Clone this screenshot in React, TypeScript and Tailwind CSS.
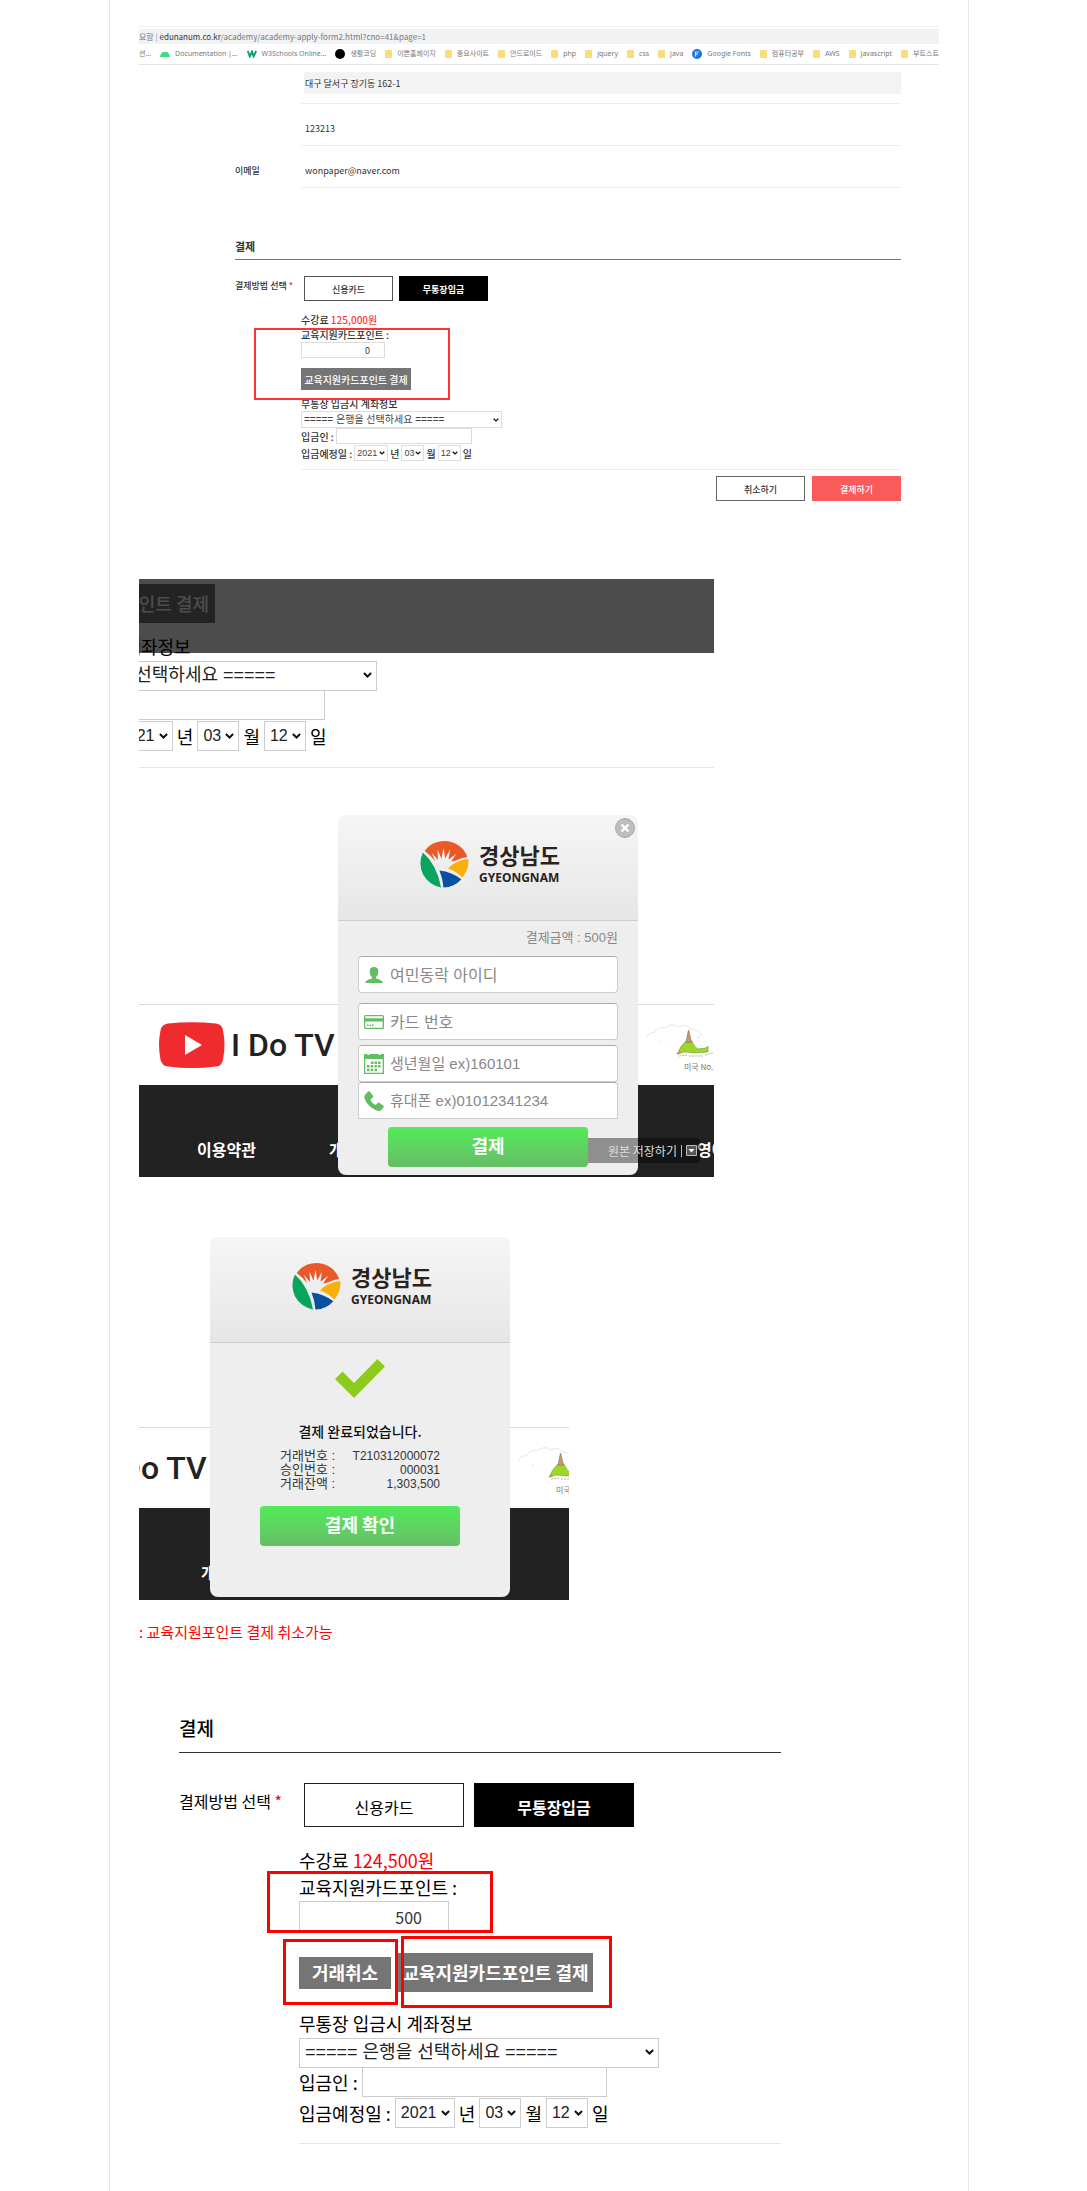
import type { ReactNode } from 'react';
import { clsx } from 'clsx';

const bookmarks = [
  { label: 'Documentation  |...', icon: 'android' },
  { label: 'W3Schools Online...', icon: 'w3' },
  { label: '생활코딩', icon: 'dot' },
  { label: '이쁜홈페이지', icon: 'folder' },
  { label: '중요사이트', icon: 'folder' },
  { label: '안드로이드', icon: 'folder' },
  { label: 'php', icon: 'folder' },
  { label: 'jquery', icon: 'folder' },
  { label: 'css', icon: 'folder' },
  { label: 'java', icon: 'folder' },
  { label: 'Google Fonts', icon: 'fonts' },
  { label: '컴퓨터공부', icon: 'folder' },
  { label: 'AWS', icon: 'folder' },
  { label: 'javascript', icon: 'folder' },
  { label: '부트스트', icon: 'folder' }
];

const receipt = [
  { label: '거래번호 :', value: 'T210312000072' },
  { label: '승인번호 :', value: '000031' },
  { label: '거래잔액 :', value: '1,303,500' }
];

function BookmarkIcon({ name }: { name: string }) {
  if (name === 'android') {
    return (
      <svg viewBox="0 0 10 6" className="h-[6px] w-[10px] shrink-0" fill="#3ddc84">
        <path d="M0 6a5 5 0 0 1 2-4L1.500.5l.8 1A5 5 0 0 1 7.700 1.500l.8-1L8 2a5 5 0 0 1 2 4z" />
      </svg>
    );
  }
  if (name === 'w3') {
    return (
      <svg viewBox="0 0 10 8" className="h-2 w-[10px] shrink-0" fill="none" stroke="#0a9d68" strokeWidth="1.800">
        <path d="M.8 1l2 5.500L5 1.500l1.500 5L9.200 1" />
      </svg>
    );
  }
  if (name === 'dot') {
    return <span className="size-[10px] shrink-0 rounded-full bg-black" />;
  }
  if (name === 'fonts') {
    return (
      <svg viewBox="0 0 10 10" className="size-[10px] shrink-0">
        <circle cx="5" cy="5" r="5" fill="#1a73e8" />
        <path d="M3.500 7.500V3h3.500M3.500 5.200h2.500" stroke="#cfe2ff" strokeWidth="1.200" fill="none" />
      </svg>
    );
  }
  return <span className="h-2 w-[7px] shrink-0 rounded-[1px] bg-[#fbdc7a]" />;
}

function Chevron({ small }: { small?: boolean }) {
  return (
    <svg
      viewBox="0 0 10 7"
      className={clsx('pointer-events-none absolute top-1/2 -translate-y-1/2', small ? 'right-[3px] h-1 w-[6px]' : 'right-[5px] h-[7px] w-[9px]')}
      fill="none"
      stroke="#111"
      strokeWidth="2.200"
    >
      <path d="M1 1.200l4 4 4-4" />
    </svg>
  );
}

function Picker({ label, value, className, small }: { label: string; value: string; className: string; small?: boolean }) {
  return (
    <span className={clsx('relative block shrink-0', className)}>
      <select
        aria-label={label}
        className={clsx(
          "size-full appearance-none border bg-white font-['Liberation_Sans','Noto_Sans_CJK_KR',sans-serif] font-normal",
          small ? 'border-[#ddd] pl-0.5 text-[#444]' : 'border-[#ccc] pl-[5px] text-[#222]'
        )}
      >
        <option>{value}</option>
      </select>
      <Chevron small={small} />
    </span>
  );
}

function BankFields({ small }: { small?: boolean }) {
  const row = clsx('flex items-center whitespace-nowrap', small ? 'gap-0.5' : 'gap-1');
  return (
    <div className={small ? 'text-[10px] font-medium' : 'text-[18px] text-black'}>
      <p className={clsx('whitespace-nowrap', small ? 'leading-[15px]' : 'leading-[27px]')}>무통장 입금시 계좌정보</p>
      <Picker
        label="은행"
        value="===== 은행을 선택하세요 ====="
        small={small}
        className={small ? 'h-[17px] w-[201px]' : 'h-[30px] w-[360px]'}
      />
      <label className={row}>
        <span>입금인 :</span>
        <input type="text" className={clsx('border bg-white', small ? 'h-4 w-[136px] border-[#ddd]' : 'h-[30px] w-[245px] border-[#ccc]')} />
      </label>
      <div className={clsx(row, 'mt-px', small ? 'h-4' : 'h-[30px]')}>
        <span>입금예정일 :</span>
        <Picker label="년" value="2021" small={small} className={small ? 'h-4 w-[34px] text-[9px]' : 'h-[30px] w-[60px] text-base'} />
        <span>년</span>
        <Picker label="월" value="03" small={small} className={small ? 'h-4 w-[23px] text-[9px]' : 'h-[30px] w-[42px] text-base'} />
        <span>월</span>
        <Picker label="일" value="12" small={small} className={small ? 'h-4 w-[23px] text-[9px]' : 'h-[30px] w-[42px] text-base'} />
        <span>일</span>
      </div>
    </div>
  );
}

function GyeongnamLogo() {
  return (
    <div className="flex items-center justify-center gap-2.5 pl-1 text-[#2b2220]">
      <svg viewBox="0 0 49 49" className="size-[49px]">
        <path
          d="M4.700 12A24.300 24.300 0 0 1 47.300 18Q41 18.500 36 21.500L31 22.500 36.500 14.500 28.500 20.800 30 10.500 25.300 19.500 23.500 9 21.500 19.800 17.500 10.500 18 21 11.500 13.500 15.300 22.300Q10 16 4.700 12z"
          fill="#ea5a28"
        />
        <path d="M3 13.500Q17 26 21 48.400A24.300 24.300 0 0 1 3 13.500z" fill="#0aa45f" />
        <path d="M48.300 20Q34 22 28 29.500Q36 32 42.200 38.500A24.300 24.300 0 0 0 48.300 20z" fill="#f8b008" />
        <path d="M19.500 31.500Q32 33 41.300 40.300A24.300 24.300 0 0 1 23.500 48.600Q22.500 39 19.500 31.500z" fill="#0a4fa3" />
      </svg>
      <div>
        <p className="mb-[5px] text-[22px] font-bold leading-6">경상남도</p>
        <p className="font-['Noto_Sans',sans-serif] text-[12px] font-bold leading-[14px]">GYEONGNAM</p>
      </div>
    </div>
  );
}

function Popup({ children, className }: { children: ReactNode; className: string }) {
  return (
    <div className={clsx('absolute h-[360px] w-[300px] overflow-hidden rounded-lg bg-[#eee]', className)}>
      <div className="h-[106px] border-b border-[#ccc] bg-gradient-to-b from-[#f6f6f6] to-[#e6e6e6] pt-6">
        <GyeongnamLogo />
      </div>
      {children}
    </div>
  );
}

const popupButton =
  'mx-auto block h-10 w-[200px] rounded bg-gradient-to-b from-[#50ec58] to-[#66bd66] pb-1 text-[18px] font-bold text-white';

function PhotoIllustration() {
  return (
    <svg viewBox="0 0 72 36" className="h-9 w-[72px]">
      <path
        d="M1 14q3-6 8-5 4-7 11-5 7-6 14-1 8-4 11 2 8 0 12 6M15 18h2M20 19h1M52 14l4-2M58 18h3M55 22h2"
        stroke="#e6e6e6"
        fill="none"
      />
      <path d="M34 32l8-1M44 32h14M60 31l8-2" stroke="#b9b2a0" strokeDasharray="2 1" />
      <path d="M41 17h6q2 6 6 8l8-1 2-2v6l-14 1q-8-1-10-1l-6 2q1-7 8-13z" fill="#9fd62a" stroke="#6f9a2c" strokeWidth=".6" />
      <path d="M41 18l2.500-12 3 12q-3 1-5.500 0z" fill="#c69a6d" stroke="#8b6b4c" strokeWidth=".6" />
      <path d="M32 30l3-2" stroke="#d9826b" strokeWidth="2" />
    </svg>
  );
}

function SiteFooter({ className }: { className?: string }) {
  return (
    <footer className={clsx('whitespace-nowrap border-t border-[#dcdad8]', className)}>
      <div className="flex h-20 items-center pl-5">
        <svg viewBox="0 0 66 46" className="h-[46px] w-[66px] shrink-0">
          <path d="M9 1.500Q33-1 57 1.500q6 .5 7 7 3 14 0 29-1 6.500-7 7-24 3-48 0-6-.5-7.500-7-3-15 0-29Q3 2 9 1.500z" fill="#ee2b2e" />
          <path d="M26 13l17 10-17 10z" fill="#fff" />
        </svg>
        <p className="ml-1.5 w-[414px] shrink-0 font-['Roboto',sans-serif] text-[32px] font-medium leading-none text-[#222]">I Do TV</p>
        <div className="shrink-0 pt-2">
          <PhotoIllustration />
          <p className="pl-[39px] text-[8px] leading-[14px] text-[#777]">미국 No.1</p>
        </div>
      </div>
      <nav className="flex h-[92px] bg-[#222] pl-[58px] pt-[52px] text-base font-bold leading-6 text-white">
        <a href="#terms" className="w-[132px] shrink-0">이용약관</a>
        <a href="#privacy" className="w-[368px] shrink-0">개인</a>
        <a href="#video">영어</a>
      </nav>
    </footer>
  );
}

const fieldBox = 'flex h-[37px] items-center gap-1.5 rounded border border-[#ccc] border-t-[#aaa] bg-white pl-[5px]';

function Field({ icon, placeholder, className, inputClass }: { icon: ReactNode; placeholder: string; className?: string; inputClass: string }) {
  return (
    <label className={clsx(fieldBox, className)}>
      <svg viewBox="0 0 20 20" className="size-5 shrink-0" fill="#62bd62">
        {icon}
      </svg>
      <input
        type="text"
        aria-label={placeholder}
        placeholder={placeholder}
        className={clsx(
          "w-full min-w-0 pt-0.5 font-['Liberation_Sans','Noto_Sans_CJK_KR',sans-serif] placeholder:text-[#888]",
          inputClass
        )}
      />
    </label>
  );
}

function BrowserBar() {
  return (
    <div className="border-t border-[#f0f0f0] pt-0.5 text-[8px] text-[#777]">
      <p className="h-[15px] whitespace-nowrap bg-[#f1f2f4] leading-[15px]">
        요함 <span className="text-[#999]">|</span> <span className="text-[#333]">edunanum.co.kr</span>
        /academy/academy-apply-form2.html?cno=41&amp;page=1
      </p>
      <div className="flex h-[21px] items-center justify-between overflow-hidden whitespace-nowrap border-b border-[#e4e4e4] font-['Noto_Sans','Noto_Sans_CJK_KR',sans-serif] text-[7px]">
        <span>션...</span>
        {bookmarks.map((item) => (
          <a key={item.label} href="#bookmark" className="flex items-center gap-[5px]">
            <BookmarkIcon name={item.icon} />
            {item.label}
          </a>
        ))}
      </div>
    </div>
  );
}

function ApplyForm() {
  return (
    <section>
      <BrowserBar />
      <div className="ml-24 mr-[38px] text-[#333]">
        {/* Applicant info */}
        <div className="ml-[66px] pt-[7px] text-[9px]">
          <div className="border-b border-[#eee] pb-[9px] pl-[3px]">
            <p className="h-[22px] bg-[#f3f3f3] pl-px leading-6">대구 달서구 장기동 162-1</p>
          </div>
          <p className="h-[42px] border-b border-[#eee] pl-1 pt-2 leading-[34px]">123213</p>
        </div>
        <div className="flex text-[9px] leading-[34px]">
          <span className="w-[66px] shrink-0 pt-2 font-medium">이메일</span>
          <p className="h-[42px] grow border-b border-[#eee] pl-1 pt-2">wonpaper@naver.com</p>
        </div>

        {/* Payment */}
        <h2 className="mt-[46px] h-[26px] border-b border-[#777] text-[11px] font-bold leading-6">결제</h2>
        <div className="flex">
          <p className="w-[66px] shrink-0 whitespace-nowrap pt-[18px] text-[9px] font-medium leading-4">
            결제방법 선택 <span className="text-red-500">*</span>
          </p>
          <div className="grow pt-4">
            <div className="flex gap-1.5 pl-[3px] text-[9px] font-medium">
              <button type="button" className="h-[25px] w-[89px] border border-[#555] pt-0.5">신용카드</button>
              <button type="button" className="h-[25px] w-[89px] bg-black pt-0.5 font-bold text-white">무통장입금</button>
            </div>
            <div className="border-b border-[#eee] pb-2 pt-[11px] text-[10px] font-medium leading-[15px]">
              <p>수강료 <span className="text-[#ff3b3b]">125,000원</span></p>
              <div className="relative">
                <label className="block">
                  교육지원카드포인트 :
                  <input type="text" defaultValue="0" className="block h-4 w-[84px] border border-[#ddd] bg-white pr-3.5 text-right text-[9px] font-normal" />
                </label>
                <button type="button" className="mt-[10px] block h-[22px] w-[110px] whitespace-nowrap bg-[#757575] text-[10px] text-white">
                  교육지원카드포인트 결제
                </button>
                <div className="pointer-events-none absolute -left-[47px] top-px h-[72px] w-[196px] border-2 border-[#fb3535]" />
              </div>
              <div className="mt-1.5">
                <BankFields small />
              </div>
            </div>
          </div>
        </div>
        <div className="mt-1.5 flex justify-end gap-[7px] text-[9px] font-medium">
          <button type="button" className="h-[25px] w-[89px] border border-[#666] pt-0.5">취소하기</button>
          <button type="button" className="h-[25px] w-[89px] bg-[#f95b5a] pt-0.5 text-white">결제하기</button>
        </div>
      </div>
    </section>
  );
}

function PayPopupShot() {
  return (
    <section className="relative mt-[78px] max-w-[575px] overflow-hidden">
      <div className="border-b border-[#e6e6e6] pb-4 pt-[5px]">
        <div className="-ml-[122px] text-[#111]">
          <button type="button" className="mb-[10px] block h-[39px] w-[198px] whitespace-nowrap bg-[#757575] text-[18px] font-medium text-white">
            교육지원카드포인트 결제
          </button>
          <BankFields />
        </div>
      </div>
      <div className="absolute inset-x-0 top-0 h-[74px] bg-black/70" />
      <SiteFooter className="mt-[236px]" />

      <Popup className="left-[199px] top-[236px]">
        <button type="button" aria-label="닫기" className="absolute right-[3px] top-[3px]">
          <svg viewBox="0 0 20 20" className="size-5">
            <circle cx="10" cy="10" r="9.500" fill="#bdbdbd" stroke="#a8a8a8" />
            <path d="M6.500 6.500l7 7M13.500 6.500l-7 7" stroke="#fff" strokeWidth="2.400" />
          </svg>
        </button>
        <div className="px-5">
          <p className="h-[35px] text-right font-['Liberation_Sans','Noto_Sans_CJK_KR',sans-serif] text-[13px] leading-[34px] text-[#888]">
            결제금액 : 500원
          </p>
          <Field
            placeholder="여민동락 아이디"
            inputClass="text-base"
            icon={<path d="M10 2q4.500 0 4.300 4.500Q14 11 12 12v1.500q6 1 7 4.500H1q1-3.500 7-4.500V12Q6 11 5.700 6.500 5.500 2 10 2z" />}
          />
          <Field
            placeholder="카드 번호"
            inputClass="text-base"
            className="mt-2.5"
            icon={
              <path
                fillRule="evenodd"
                d="M1.500 3h17q1.500 0 1.500 1.500v11q0 1.500-1.500 1.500h-17Q0 17 0 15.500v-11Q0 3 1.500 3zM1.300 4.300v2h17.400v-2zM1.300 9.500v6.200h17.400V9.500zM3 12.500h1.600v1.600H3zM5.500 12.500h1.600v1.600H5.500zM8 12.500h1.600v1.600H8z"
              />
            }
          />
          <Field
            placeholder="생년월일 ex)160101"
            inputClass="text-[15px]"
            className="mt-[5px]"
            icon={
              <path
                fillRule="evenodd"
                d="M0 0h3q1 2 3 0h8q2 2 3 0h3v20H0zM1.300 5v13.700h17.400V5zM7 7.500h2.500V10H7zM10.500 7.500H13V10h-2.500zM14 7.500h2.500V10H14zM3 11h2.500v2.500H3zM6.700 11h2.500v2.500H6.700zM10.500 11H13v2.500h-2.500zM14 11h2.500v2.500H14zM3 14.700h2.500v2.500H3zM6.700 14.700h2.500v2.500H6.700zM10.500 14.700H13v2.500h-2.500z"
              />
            }
          />
          <Field
            placeholder="휴대폰 ex)01012341234"
            inputClass="text-[15px]"
            className="rounded-b-none"
            icon={<path d="M1 4l3-3.500q1-.8 2 .2l3 4q.6 1-.3 1.800L6.500 8.500q1 3.500 5 5.500l2.200-2q1-.8 1.800-.1l3.800 2.600q1 .8.300 1.800L17 19.500q-2 1-5-.3Q3 15 .5 7.500 0 5.300 1 4z" />}
          />
        </div>
        <button type="submit" className={clsx(popupButton, 'mt-2')}>결제</button>
      </Popup>

      {/* Image saver tooltip */}
      <div className="absolute left-[449px] top-[559px] flex h-[25px] w-[112px] items-center gap-1 rounded-r-sm bg-black/40 pl-5 text-xs text-[#ddd]">
        <span className="whitespace-nowrap">원본 저장하기</span>
        <span className="h-3 border-l border-[#bbb]" />
        <svg viewBox="0 0 11 11" className="size-[11px] shrink-0">
          <path d="M.5.5h10v10H.5z" fill="#555" stroke="#bbb" />
          <path d="M2.500 4h6l-3 3.500z" fill="#fff" />
        </svg>
      </div>
    </section>
  );
}

function DonePopupShot() {
  return (
    <section className="relative mt-[60px] max-w-[430px] overflow-hidden pt-[190px]">
      <SiteFooter className="-ml-32" />
      <Popup className="left-[71px] top-0">
        <svg viewBox="0 0 50 39" className="mx-auto mt-4 h-[39px] w-[50px]">
          <path d="M0 20l7.500-7.500L19 24 42.500 0 50 7.500 19 39z" fill="#8ccb1b" />
        </svg>
        <p className="mt-[23px] text-center text-sm font-medium leading-5 text-[#111]">결제 완료되었습니다.</p>
        <table className="ml-[70px] mt-2 w-[160px] font-['Liberation_Sans','Noto_Sans_CJK_KR',sans-serif] text-xs leading-[14px] text-[#333]">
          <tbody>
            {receipt.map((row) => (
              <tr key={row.label}>
                <th scope="row" className="text-left text-[13px] font-normal leading-[14px]">{row.label}</th>
                <td className="text-right">{row.value}</td>
              </tr>
            ))}
          </tbody>
        </table>
        <button type="button" className={clsx(popupButton, 'mt-[15px]')}>결제 확인</button>
      </Popup>
    </section>
  );
}

function CancelForm() {
  const redBox = 'pointer-events-none absolute border-[3px] border-[#f00]';
  return (
    <section className="ml-10 mt-[70px] max-w-[602px] text-black">
      <h2 className="h-[41px] border-b border-[#333] text-[19px] font-medium leading-8">결제</h2>
      <div className="flex">
        <p className="w-[120px] shrink-0 whitespace-nowrap pt-9 text-base leading-6">
          결제방법 선택 <span className="text-red-600">*</span>
        </p>
        <div className="grow border-b border-[#e6e6e6] pb-[15px] pt-[30px]">
          <div className="flex gap-2.5 pl-[5px] text-base">
            <button type="button" className="h-11 w-[160px] border border-[#222] pt-1">신용카드</button>
            <button type="button" className="h-11 w-[160px] bg-black pt-1 font-bold text-white">무통장입금</button>
          </div>
          <p className="mt-5 text-[18px] leading-[27px]">수강료 <span className="text-[#f00]">124,500원</span></p>
          <div className="relative text-[18px] leading-[27px]">
            <label className="block">
              교육지원카드포인트 :
              <input type="text" defaultValue="500" className="block h-[30px] w-[150px] border border-[#ccc] bg-white pr-[26px] pt-0.5 text-right text-base text-[#333]" />
            </label>
            <div className="mt-[22px] flex items-center gap-[7px] font-bold text-white">
              <button type="button" className="h-8 w-[92px] bg-[#757575]">거래취소</button>
              <button type="button" className="h-[39px] w-[195px] whitespace-nowrap bg-[#757575]">교육지원카드포인트 결제</button>
            </div>
            <div className={clsx(redBox, '-left-8 -top-[3px] h-[62px] w-[226px]')} />
            <div className={clsx(redBox, '-left-4 top-[65px] h-[66px] w-[115px]')} />
            <div className={clsx(redBox, 'left-[102px] top-[62px] h-[72px] w-[211px]')} />
          </div>
          <div className="mt-[18px]">
            <BankFields />
          </div>
        </div>
      </div>
    </section>
  );
}

export default function App() {
  return (
    <main className="bg-white pr-[9px] font-['Noto_Sans_CJK_KR',sans-serif]">
      <article className="mx-auto max-w-[860px] border-x border-[#e6e6e6] px-[29px] pb-[47px] pt-[26px]">
        <ApplyForm />
        <PayPopupShot />
        <DonePopupShot />
        <p className="mt-[22px] text-[15px] leading-5 text-[#f00]">: 교육지원포인트 결제 취소가능</p>
        <CancelForm />
      </article>
    </main>
  );
}
